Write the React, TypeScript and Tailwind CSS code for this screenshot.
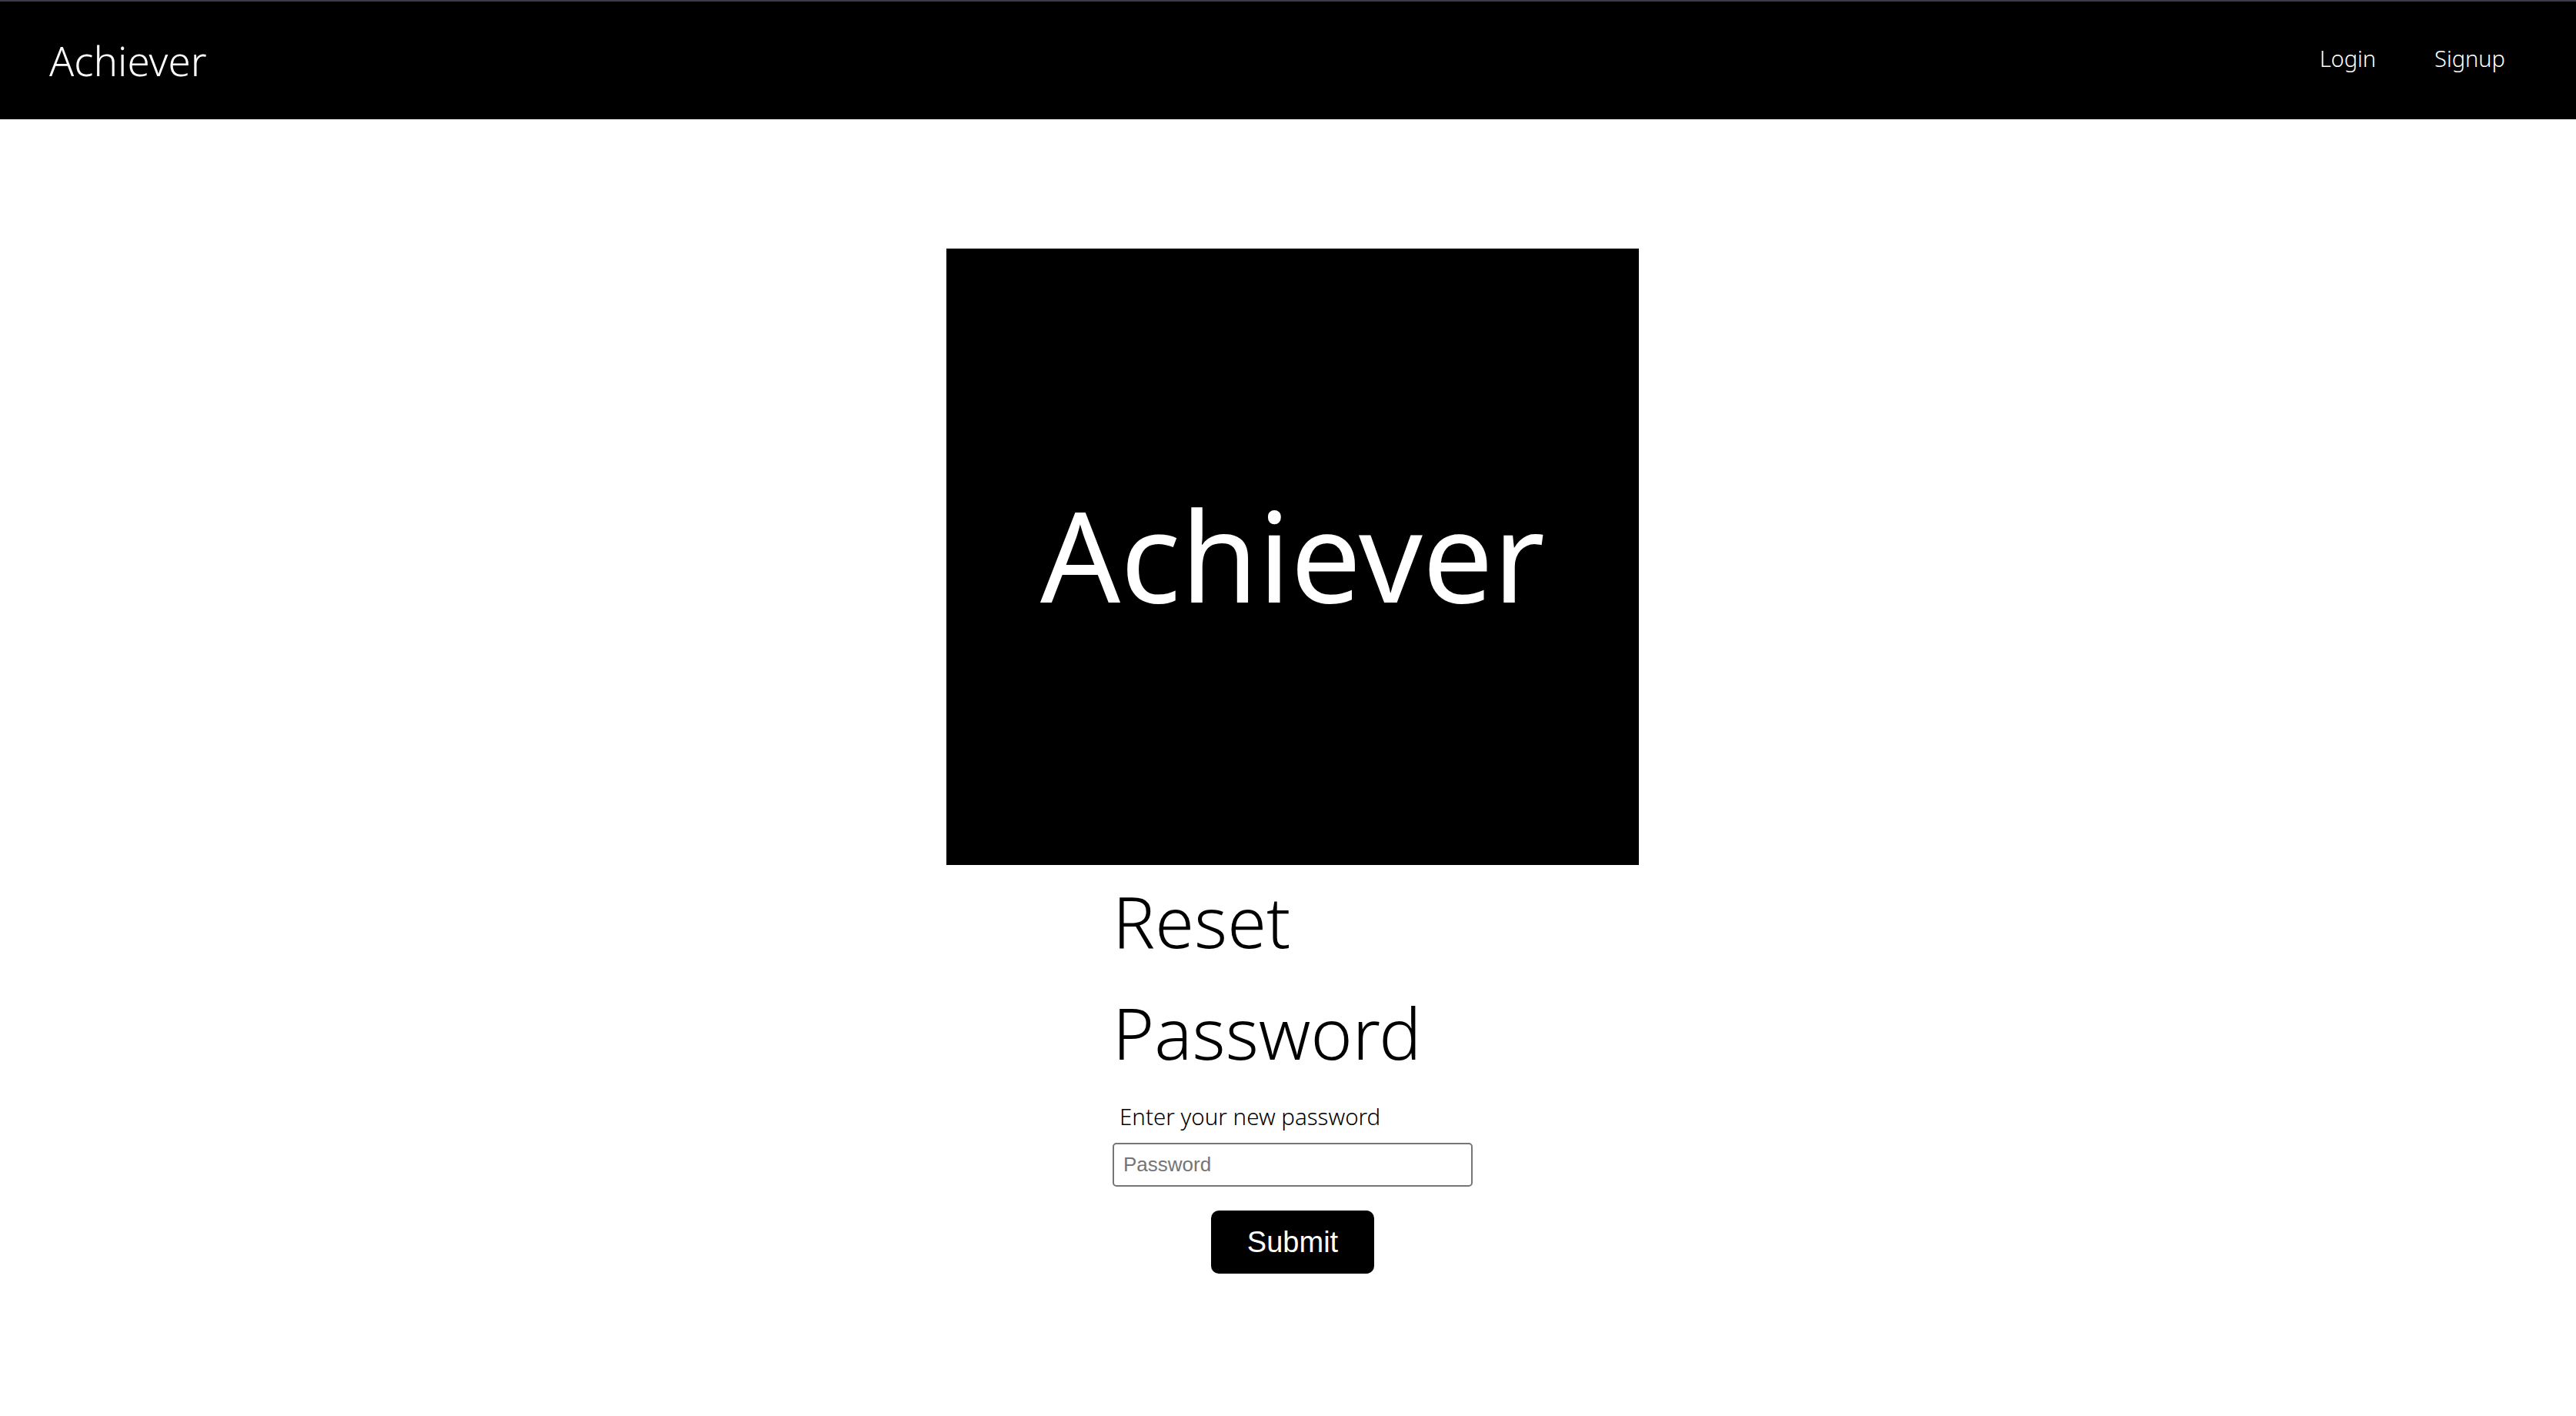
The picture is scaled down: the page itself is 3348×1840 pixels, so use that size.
import React from "react";

export default function App() {
  return (
    <div className="min-h-screen bg-white font-['Noto_Sans',sans-serif]">
      <nav className="flex h-[155px] items-center justify-between border-t-2 border-[#3b3b4e] bg-black pl-[64px] pr-[92px] text-white">
        <span className="text-[53px] font-light leading-none">Achiever</span>
        <div className="flex gap-[76px] pb-[6px] text-[29px] font-light leading-none">
          <a>Login</a>
          <a>Signup</a>
        </div>
      </nav>
      <main className="flex flex-col items-center pl-[12px] pt-[168px]">
        <div className="flex h-[801px] w-[900px] items-center justify-center bg-black">
          <span className="pb-[6px] text-[163px] leading-none text-white">Achiever</span>
        </div>
        <form className="flex w-[468px] flex-col items-center" onSubmit={(e) => e.preventDefault()}>
          <h1 className="w-full text-[92px] font-light leading-[145px] text-black">Reset Password</h1>
          <label className="mt-[17px] w-full pl-[9px] text-[29.5px] font-light leading-[40px] text-black">Enter your new password</label>
          <input
            type="password"
            placeholder="Password"
            className="mt-[14px] h-[57px] w-full rounded-[5px] border-2 border-[#767676] pl-3 font-['Liberation_Sans',Arial,sans-serif] text-[26px] placeholder:text-[#757575]"
          />
          <button className="mt-[31px] h-[82px] w-[212px] rounded-[10px] bg-black font-['Liberation_Sans',Arial,sans-serif] text-[38px] text-white">
            Submit
          </button>
        </form>
      </main>
    </div>
  );
}
